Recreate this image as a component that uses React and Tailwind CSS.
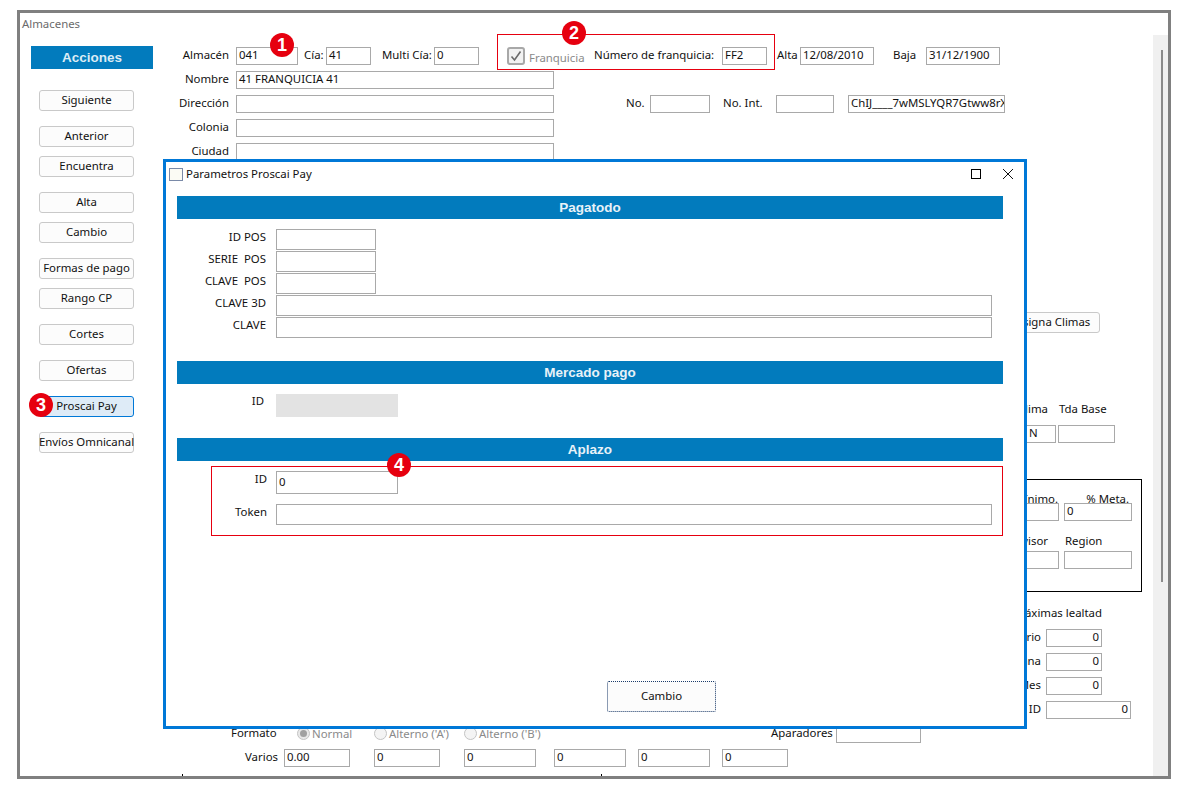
const Lbl = ({ w, ml = "", children, align = "text-right", color = "text-[#111]", up = true }) => (
  <div className={`${w} ${ml} ${align} ${color} ${up ? "mb-[2px]" : ""} shrink-0 whitespace-nowrap text-[11.4px] leading-[14px]`}>{children}</div>
);

const Inp = ({ w, ml = "", h = "h-[18px]", right = false, bg = "bg-white", children }) => (
  <div className={`${w} ${ml} ${h} ${bg} ${right ? "justify-end" : ""} flex shrink-0 items-center overflow-hidden whitespace-nowrap border border-[#a9a9a9] px-[2px] pb-[2px] text-[11.4px] text-[#111]`}>
    {children}
  </div>
);

const SideBtn = ({ mt, active, children }) => (
  <div className={`${mt} ml-[8px] flex h-[21px] w-[95px] items-center justify-center whitespace-nowrap rounded-[3px] border pb-[2px] text-[11.4px] text-[#111] ${active ? "border-[#0078d7] bg-[#deebf7]" : "border-[#c9c9c9] bg-[#fcfcfc]"}`}>
    {children}
  </div>
);

const Badge = ({ n, pos }) => (
  <div className={`${pos} absolute flex h-[24px] w-[24px] items-center justify-center rounded-full bg-[#e6000f] font-["Liberation_Sans"] text-[18px] font-bold text-white`}>
    {n}
  </div>
);

const SectionBar = ({ mt, children }) => (
  <div className={`${mt} flex h-[23px] w-[826px] items-center justify-center bg-[#027bbd] pt-[1px] font-["Liberation_Sans"] text-[13.5px] font-bold text-[#e8f2f8]`}>
    {children}
  </div>
);

const Radio = ({ on, ml, w, children }) => (
  <div className={`${ml} ${w} flex shrink-0 items-center gap-[2px] whitespace-nowrap text-[11.4px] text-[#8a8a8a]`}>
    <span className={`flex h-[13px] w-[13px] shrink-0 items-center justify-center rounded-full border ${on ? "border-[#c4c4c4] bg-[#e8e8e8]" : "border-[#c4c4c4] bg-[#f4f4f4]"}`}>
      {on && <span className="h-[7px] w-[7px] rounded-full bg-[#a0a0a0]" />}
    </span>
    {children}
  </div>
);

const ModalRow = ({ label, mt = "", h = "h-[21px]", w = "w-[100px]", pr = "pr-[10px]", bg, children }) => (
  <div className={`${mt} flex items-start`}>
    <div className={`${pr} w-[99px] shrink-0 whitespace-pre text-right text-[11.4px] leading-[16px] text-[#111]`}>{label}</div>
    <Inp w={w} h={h} bg={bg}>{children}</Inp>
  </div>
);

export default function App() {
  return (
    <div className="relative h-[792px] w-[1189px] overflow-hidden bg-white pl-[17px] pt-[10px] font-['Noto_Sans',sans-serif]">
      {/* Main window */}
      <div className="h-[769px] w-[1154px] border-[3px] border-[#808080] bg-white">
        <div className="flex h-[22px] items-center pl-[2px] text-[11.4px] text-[#6b6b6b]">Almacenes</div>
        <div className="flex h-[741px] overflow-hidden">
          {/* Sidebar */}
          <div className="ml-[11px] w-[122px] shrink-0 pt-[11px]">
            <div className="flex h-[23px] w-[122px] items-center justify-center bg-[#027bbd] pt-[1px] font-['Liberation_Sans'] text-[13.5px] font-bold text-[#dcecf5]">
              Acciones
            </div>
            <SideBtn mt="mt-[21px]">Siguiente</SideBtn>
            <SideBtn mt="mt-[15px]">Anterior</SideBtn>
            <SideBtn mt="mt-[9px]">Encuentra</SideBtn>
            <SideBtn mt="mt-[15px]">Alta</SideBtn>
            <SideBtn mt="mt-[9px]">Cambio</SideBtn>
            <SideBtn mt="mt-[15px]">Formas de pago</SideBtn>
            <SideBtn mt="mt-[9px]">Rango CP</SideBtn>
            <SideBtn mt="mt-[15px]">Cortes</SideBtn>
            <SideBtn mt="mt-[15px]">Ofertas</SideBtn>
            <SideBtn mt="mt-[15px]" active>Proscai Pay</SideBtn>
            <SideBtn mt="mt-[15px]">Envíos Omnicanal</SideBtn>
          </div>

          {/* Form */}
          <div className="w-[1000px] shrink-0 pt-[12px]">
            <div className="flex h-[18px] items-center">
              <Lbl w="w-[76px]">Almacén</Lbl>
              <Inp w="w-[62px]" ml="ml-[7px]">041</Inp>
              <Lbl w="w-[20px]" ml="ml-[6px]" align="text-left">Cía:</Lbl>
              <Inp w="w-[45px]" ml="ml-[2px]">41</Inp>
              <Lbl w="w-[51px]" ml="ml-[11px]" align="text-left">Multi Cía:</Lbl>
              <Inp w="w-[45px]" ml="ml-[1px]">0</Inp>
              <div className="ml-[28px] flex h-[18px] w-[18px] shrink-0 items-center justify-center rounded-[3px] border-2 border-[#a8a8a8] bg-[#f2f2f2]">
                <svg width="12" height="12" viewBox="0 0 12 12" fill="none">
                  <path d="M1.5 6.5 L4.5 10 L10.5 1.5" stroke="#6a6a6a" strokeWidth="1.6" />
                </svg>
              </div>
              <div className="ml-[4px] mt-[3px] w-[55px] shrink-0 whitespace-nowrap text-[11.4px] leading-[14px] text-[#8a8a8a]">Franquicia</div>
              <Lbl w="w-[119px]" ml="ml-[10px]" align="text-left">Número de franquicia:</Lbl>
              <Inp w="w-[45px]" ml="ml-[9px]">FF2</Inp>
              <Lbl w="w-[21px]" ml="ml-[10px]" align="text-left">Alta</Lbl>
              <Inp w="w-[74px]" ml="ml-[2px]">12/08/2010</Inp>
              <Lbl w="w-[22px]" ml="ml-[19px]" align="text-left">Baja</Lbl>
              <Inp w="w-[74px]" ml="ml-[11px]">31/12/1900</Inp>
            </div>
            <div className="mt-[6px] flex h-[18px] items-center">
              <Lbl w="w-[76px]">Nombre</Lbl>
              <Inp w="w-[318px]" ml="ml-[7px]">41 FRANQUICIA 41</Inp>
            </div>
            <div className="mt-[6px] flex h-[18px] items-center">
              <Lbl w="w-[76px]">Dirección</Lbl>
              <Inp w="w-[318px]" ml="ml-[7px]" />
              <Lbl w="w-[19px]" ml="ml-[72px]" align="text-left">No.</Lbl>
              <Inp w="w-[60px]" ml="ml-[5px]" />
              <Lbl w="w-[39px]" ml="ml-[13px]" align="text-left">No. Int.</Lbl>
              <Inp w="w-[58px]" ml="ml-[14px]" />
              <Inp w="w-[157px]" ml="ml-[14px]">ChIJ____7wMSLYQR7Gtww8rX</Inp>
            </div>
            <div className="mt-[6px] flex h-[18px] items-center">
              <Lbl w="w-[76px]">Colonia</Lbl>
              <Inp w="w-[318px]" ml="ml-[7px]" />
            </div>
            <div className="mt-[6px] flex h-[18px] items-center">
              <Lbl w="w-[76px]">Ciudad</Lbl>
              <Inp w="w-[318px]" ml="ml-[7px]" />
            </div>

            {/* Right column, mostly behind the dialog */}
            <div className="ml-[853px] mt-[151px] flex h-[21px] w-[94px] items-center justify-center whitespace-nowrap rounded-[3px] border border-[#c9c9c9] bg-[#fcfcfc] pb-[2px] text-[11.4px] text-[#111]">
              Asigna Climas
            </div>
            <div className="mt-[69px] flex h-[14px] items-center">
              <Lbl up={false} w="w-[48px]" ml="ml-[847px]">Clima</Lbl>
              <Lbl up={false} w="w-[56px]" ml="ml-[11px]" align="text-left">Tda Base</Lbl>
            </div>
            <div className="mt-[9px] flex h-[18px] items-center">
              <Inp w="w-[30px]" ml="ml-[873px]">N</Inp>
              <Inp w="w-[57px]" ml="ml-[2px]" />
            </div>
            <div className="ml-[807px] mt-[36px] h-[113px] w-[182px] border border-black pt-[12px]">
              <div className="flex h-[14px] items-center">
                <Lbl up={false} w="w-[97px]">Ventas mínimo.</Lbl>
                <Lbl up={false} w="w-[71px]" align="text-right">% Meta.</Lbl>
              </div>
              <div className="mt-[-3px] flex h-[18px] items-center">
                <Inp w="w-[69px]" ml="ml-[29px]" />
                <Inp w="w-[68px]" ml="ml-[5px]">0</Inp>
              </div>
              <div className="mt-[13px] flex h-[14px] items-center">
                <Lbl up={false} w="w-[87px]">Supervisor</Lbl>
                <Lbl up={false} w="w-[50px]" ml="ml-[17px]" align="text-left">Region</Lbl>
              </div>
              <div className="mt-[3px] flex h-[18px] items-center">
                <Inp w="w-[69px]" ml="ml-[29px]" />
                <Inp w="w-[68px]" ml="ml-[5px]" />
              </div>
            </div>
            <div className="mt-[14px] flex h-[14px] items-center">
              <Lbl up={false} w="w-[149px]" ml="ml-[800px]">Compras máximas lealtad</Lbl>
            </div>
            <div className="mt-[9px] flex h-[18px] items-center">
              <Lbl w="w-[88px]" ml="ml-[800px]">Diario</Lbl>
              <Inp w="w-[56px]" ml="ml-[5px]" right>0</Inp>
            </div>
            <div className="mt-[6px] flex h-[18px] items-center">
              <Lbl w="w-[88px]" ml="ml-[800px]">Semana</Lbl>
              <Inp w="w-[56px]" ml="ml-[5px]" right>0</Inp>
            </div>
            <div className="mt-[6px] flex h-[18px] items-center">
              <Lbl w="w-[88px]" ml="ml-[800px]">Mes</Lbl>
              <Inp w="w-[56px]" ml="ml-[5px]" right>0</Inp>
            </div>
            <div className="mt-[6px] flex h-[18px] items-center">
              <Lbl w="w-[88px]" ml="ml-[800px]">ID</Lbl>
              <Inp w="w-[85px]" ml="ml-[5px]" right>0</Inp>
            </div>

            {/* Bottom rows */}
            <div className="mt-[6px] flex h-[18px] items-center">
              <Lbl w="w-[45px]" ml="ml-[78px]" align="text-left">Formato</Lbl>
              <Radio on ml="ml-[21px]" w="w-[77px]">Normal</Radio>
              <Radio ml="ml-[0px]" w="w-[90px]">Alterno ('A')</Radio>
              <Radio ml="ml-[0px]" w="w-[307px]">Alterno ('B')</Radio>
              <Lbl w="w-[60px]" align="text-left">Aparadores</Lbl>
              <Inp w="w-[85px]" ml="ml-[5px]" />
            </div>
            <div className="mt-[6px] flex h-[18px] items-center">
              <Lbl w="w-[32px]" ml="ml-[92px]" align="text-left">Varios</Lbl>
              <Inp w="w-[66px]" ml="ml-[7px]">0.00</Inp>
              <Inp w="w-[66px]" ml="ml-[24px]">0</Inp>
              <Inp w="w-[72px]" ml="ml-[24px]">0</Inp>
              <Inp w="w-[72px]" ml="ml-[18px]">0</Inp>
              <Inp w="w-[72px]" ml="ml-[12px]">0</Inp>
              <Inp w="w-[66px]" ml="ml-[12px]">0</Inp>
            </div>
            <div className="mt-[7px] flex">
              <div className="ml-[29px] h-[4px] w-[1px] bg-black" />
              <div className="ml-[418px] h-[4px] w-[1px] bg-black" />
            </div>
          </div>

          {/* Scrollbar */}
          <div className="w-[15px] shrink-0 bg-[#f0f0f0] pl-[8px] pt-[15px]">
            <div className="h-[532px] w-[2px] bg-[#8a8a8a]" />
          </div>
        </div>
      </div>

      {/* Dialog */}
      <div className="absolute left-[163px] top-[159px] h-[570px] w-[864px] border-[3px] border-[#0078d7] bg-white">
        <div className="flex h-[22px] items-center pt-[2px]">
          <div className="ml-[3px] h-[13px] w-[14px] border border-[#7a8aa8] bg-[#fbfbf4]" />
          <div className="ml-[3px] text-[11.4px] text-[#111]">Parametros Proscai Pay</div>
          <div className="ml-auto mr-[22px] h-[10px] w-[10px] border border-black" />
          <svg className="mr-[11px]" width="10" height="10" viewBox="0 0 10 10" fill="none">
            <path d="M0 0 L10 10 M10 0 L0 10" stroke="#111" strokeWidth="1" />
          </svg>
        </div>
        <div className="pl-[11px]">
          <SectionBar mt="mt-[12px]">Pagatodo</SectionBar>
          <div className="mt-[10px] flex flex-col gap-[1px]">
            <ModalRow label="ID POS" />
            <ModalRow label="SERIE  POS" />
            <ModalRow label="CLAVE  POS" />
            <ModalRow label="CLAVE 3D" w="w-[716px]" />
            <ModalRow label="CLAVE" w="w-[716px]" />
          </div>
          <SectionBar mt="mt-[23px]">Mercado pago</SectionBar>
          <div className="mt-[10px] flex items-start">
            <div className="w-[99px] shrink-0 pr-[12px] text-right text-[11.4px] leading-[14px] text-[#111]">ID</div>
            <div className="h-[23px] w-[122px] bg-[#e3e3e3]" />
          </div>
          <SectionBar mt="mt-[21px]">Aplazo</SectionBar>
          <ModalRow label="ID" mt="mt-[10px]" h="h-[23px]" w="w-[122px]" pr="pr-[9px]">0</ModalRow>
          <ModalRow label="Token" mt="mt-[10px]" w="w-[716px]" pr="pr-[9px]" />
          <div className="ml-[430px] mt-[156px] flex h-[31px] w-[109px] items-center justify-center rounded-[2px] border border-dotted border-[#1a3b6a] bg-[#fcfcfc] pb-[2px] text-[11.4px] text-[#111]">
            Cambio
          </div>
        </div>
      </div>

      {/* Annotations */}
      <div className="absolute left-[497px] top-[34px] h-[36px] w-[278px] border border-[#e6000f]" />
      <div className="absolute left-[211px] top-[466px] h-[70px] w-[792px] border border-[#e6000f]" />
      <Badge n="1" pos="left-[270px] top-[33px]" />
      <Badge n="2" pos="left-[562px] top-[21px]" />
      <Badge n="3" pos="left-[29px] top-[393px]" />
      <Badge n="4" pos="left-[387px] top-[453px]" />
    </div>
  );
}
